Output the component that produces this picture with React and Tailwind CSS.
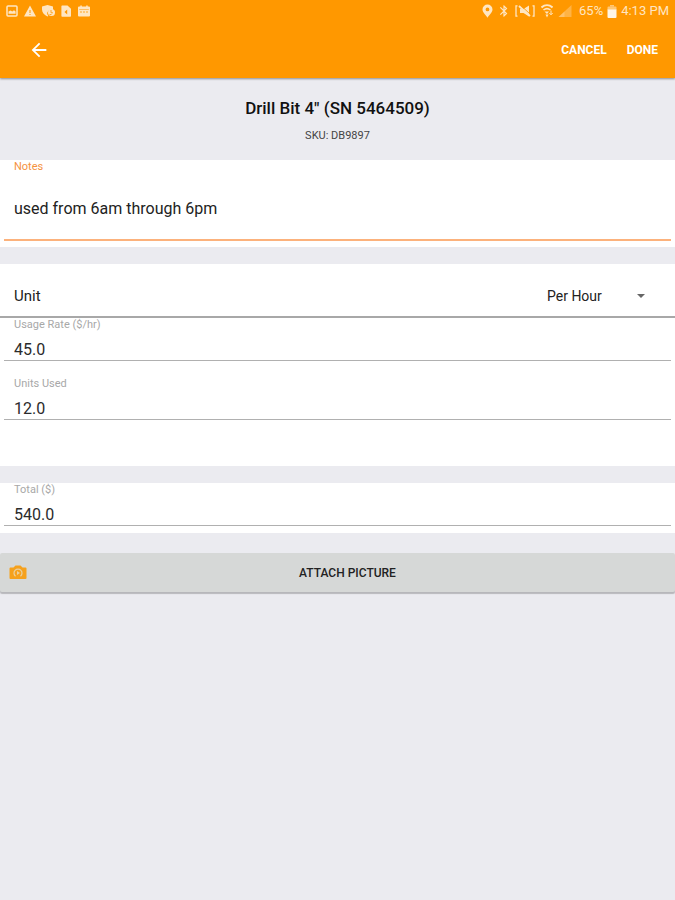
import { MdArrowBack, MdBluetooth } from 'react-icons/md'

function NotificationIcons() {
  return (
    <div className="flex items-center gap-[6px] text-[#ffe6c2]">
      <svg className="w-3 h-3" viewBox="0 0 12 12" fill="none" stroke="currentColor">
        <rect x="1" y="1" width="10" height="10" rx="1" strokeWidth="1.5" />
        <path d="M2.500 8.800V6.500l2-1 1.800 1L8 5.200l1.600 1.300v2.300z" fill="currentColor" stroke="none" />
      </svg>
      <svg className="w-3 h-3" viewBox="0 0 12 12" fill="currentColor">
        <path fillRule="evenodd" d="M6 .5 12 11.400H0zM5.500 5v3h1V5zm0 4v1h1V9z" />
      </svg>
      <svg className="w-[14px] h-3 -mr-[2px]" viewBox="0 0 14 12" fill="currentColor">
        <path d="M5.500 0 11 1.600v3.600H8.800A3.300 3.300 0 0 0 6.300 11l-.8.6C2.500 10.200 0 7.800 0 4.500V1.600z" />
        <circle cx="9.500" cy="7.500" r="3.500" />
        <path d="M9 5v2.800h2M7.500 9.500h2" fill="none" stroke="#ff9800" strokeWidth=".8" />
      </svg>
      <svg className="w-3 h-3" viewBox="0 0 12 12" fill="currentColor">
        <path fillRule="evenodd" d="M2.200.5h5.300L11 3.800V11a.8.8 0 0 1-.8.8h-8a.8.8 0 0 1-.8-.8V1.300a.8.8 0 0 1 .8-.8zM7.200 4.500 4.500 7l2.700 2.500z" />
      </svg>
      <svg className="w-3 h-3" viewBox="0 0 12 12" fill="currentColor">
        <path fillRule="evenodd" d="M2.300.5h1.500v1h4.400v-1h1.500v1H11a1 1 0 0 1 1 1v8a1 1 0 0 1-1 1H1a1 1 0 0 1-1-1v-8a1 1 0 0 1 1-1h1.300zM1.200 4v.6h9.600V4zm1 2.500v1h1.600v-1zm3 0v1h1.600v-1zm3 0v1h1.600v-1z" />
      </svg>
    </div>
  )
}

function SystemIcons() {
  return (
    <div className="flex items-center text-[#ffe6c2]">
      <svg className="w-[11px] h-[14px]" viewBox="0 0 11 14" fill="currentColor">
        <path fillRule="evenodd" d="M5.500.5a5 5 0 0 1 5 5c0 3-3 5-5 8.200-2-3.200-5-5.200-5-8.200a5 5 0 0 1 5-5zm0 3a1.900 1.900 0 1 0 0 3.800 1.900 1.900 0 0 0 0-3.800z" />
      </svg>
      <MdBluetooth className="w-[14px] h-[14px] ml-1" stroke="currentColor" />
      <svg className="w-5 h-3 ml-1" viewBox="0 0 20 12" fill="none" stroke="currentColor">
        <path d="M2.500.8H1v10.400h1.500M17.500.8H19v10.400h-1.500" strokeWidth="1.300" />
        <path d="M5 4h3.500L14 .5v11L8.500 8H5z" fill="currentColor" stroke="none" />
        <path d="m4 1 11 10" strokeWidth="1.800" />
        <path d="m5.500.2 10 9.200" stroke="#ff9800" strokeWidth=".8" />
      </svg>
      <svg className="w-3 h-[14px] ml-[6px]" viewBox="0 0 12 14" fill="none" stroke="currentColor">
        <path d="M.5 3.500C3.800.6 8.200.6 11.500 3.500" strokeWidth="2" />
        <path d="M2.500 6c2.200-1.800 4.800-1.800 7 0" strokeWidth="1.600" />
        <path d="M3.500 7.500h4.500L6 10zM4.500 10.500h3L6 13.500z" fill="currentColor" stroke="none" />
        <path d="M10 6.500v4M8.300 9 10 10.800 11.700 9" strokeWidth="1" />
      </svg>
      <svg className="w-[14px] h-3 ml-[5px]" viewBox="0 0 14 12" fill="currentColor">
        <path d="M13.500 0v12H.5z" opacity=".35" />
        <path d="M6.500 6.500V12h-6z" opacity=".3" />
      </svg>
      <span className="ml-[7px] text-[13px] leading-4">65%</span>
      <svg className="w-[10px] h-[13px] ml-1" viewBox="0 0 10 13" fill="currentColor">
        <path d="M3 0h4v1.500H3z" opacity=".6" />
        <path d="M1.500 1.500h7a1 1 0 0 1 1 1V5h-9V2.500a1 1 0 0 1 1-1z" opacity=".6" />
        <path d="M.5 4.500h9V12a1 1 0 0 1-1 1h-7a1 1 0 0 1-1-1z" fill="#fff5e5" />
      </svg>
      <span className="ml-1 text-[13px] leading-4">4:13 PM</span>
    </div>
  )
}

function Field({ id, label, value }) {
  return (
    <div className="mx-1 border-b border-[#b0b0b0]">
      <label htmlFor={id} className="block px-[10px] text-[11px] leading-[14px] text-[#a8a8a8]">
        {label}
      </label>
      <input
        id={id}
        type="text"
        inputMode="decimal"
        defaultValue={value}
        className="block w-full h-7 px-[10px] pt-[6px] text-base leading-5 text-[#2b2b2b] bg-transparent outline-none"
      />
    </div>
  )
}

export default function App() {
  return (
    <div className="min-h-screen bg-[#ebebf0] font-['Roboto',sans-serif] text-[#222]">
      <header className="relative bg-[#ff9800] shadow-[0_1px_2px_rgba(0,0,0,0.4)]">
        <div className="flex items-center justify-between h-[22px] px-[6px]">
          <NotificationIcons />
          <SystemIcons />
        </div>
        <div className="flex items-center h-14 pl-7 pr-[17px] text-white">
          <button type="button" aria-label="Back" className="mr-auto">
            <MdArrowBack className="w-[22px] h-[22px]" />
          </button>
          <button type="button" className="text-[12px] leading-4 font-bold">CANCEL</button>
          <button type="button" className="ml-5 text-[12px] leading-4 font-bold">DONE</button>
        </div>
      </header>

      <main>
        <div className="h-[82px] pt-5 text-center">
          <h1 className="text-[17px] leading-5 font-medium text-[#111]">Drill Bit 4" (SN 5464509)</h1>
          <p className="mt-[10px] text-[11px] leading-4 text-[#444]">SKU: DB9897</p>
        </div>

        <section className="pb-[6px] bg-white">
          <div className="mx-1 border-b-2 border-[#fcb27c]">
            <label htmlFor="notes" className="block px-[10px] text-[11px] leading-[14px] text-[#f5923e]">
              Notes
            </label>
            <input
              id="notes"
              type="text"
              defaultValue="used from 6am through 6pm"
              className="block w-full h-[65px] px-[10px] pt-1 text-base leading-5 bg-transparent outline-none"
            />
          </div>
        </section>

        <section className="mt-[17px] pb-[46px] bg-white">
          <div className="flex items-center justify-between h-[54px] pt-3 pl-[14px] pr-7 border-b-2 border-[#a8a8a8]">
            <label htmlFor="unit" className="text-[15px] leading-5">Unit</label>
            <div className="relative flex items-center">
              <select id="unit" className="w-[100px] appearance-none bg-transparent text-sm leading-5 outline-none">
                <option>Per Hour</option>
              </select>
              <svg className="absolute right-[2px] w-2 h-1 pointer-events-none" viewBox="0 0 8 4" fill="#666">
                <path d="M0 0h8L4 4z" />
              </svg>
            </div>
          </div>
          <Field id="rate" label="Usage Rate ($/hr)" value="45.0" />
          <div className="pt-4">
            <Field id="units" label="Units Used" value="12.0" />
          </div>
        </section>

        <section className="mt-[17px] pb-[7px] bg-white">
          <Field id="total" label="Total ($)" value="540.0" />
        </section>

        <button
          type="button"
          className="flex items-center w-full h-[39px] mt-5 pl-2 pr-2 rounded-[2px] bg-[#d6d8d7] shadow-[0_2px_1px_rgba(0,0,0,0.22)]"
        >
          <svg className="w-5 h-4" viewBox="0 0 20 16">
            <path d="M2.500 2.500h3L7.500.5h5l2 2h3a1 1 0 0 1 1 1v9.500a1 1 0 0 1-1 1h-15a1 1 0 0 1-1-1V3.500a1 1 0 0 1 1-1z" fill="#f5a11d" />
            <path d="M7.500 11.200a4 4 0 1 1 5 0" fill="none" stroke="#ead0a0" strokeWidth="1.200" />
            <path d="M9 6v4l3-2z" fill="#ead0a0" />
          </svg>
          <span className="flex-1 text-[12px] leading-4 font-medium text-center text-[#222]">ATTACH PICTURE</span>
        </button>
      </main>
    </div>
  )
}
